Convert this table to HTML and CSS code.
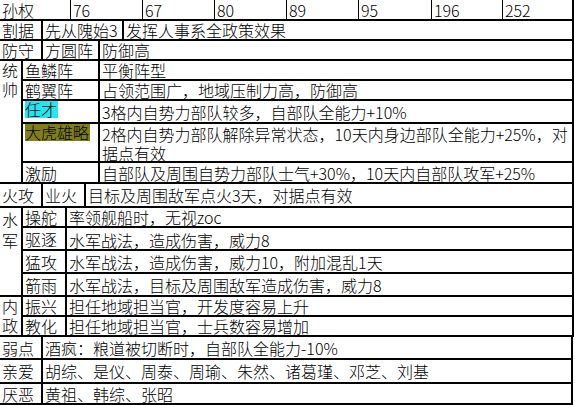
FILE: index.html
```html
<!DOCTYPE html>
<html lang="zh-CN">
<head>
<meta charset="utf-8">
<title>孙权</title>
<link rel="stylesheet" href="styles.css">
</head>
<body>
<div class="sheet">
  <div class="sec stats">
    <div class="c thin">孙权</div>
    <div class="c thin">76</div>
    <div class="c thin">67</div>
    <div class="c thin">80</div>
    <div class="c thin">89</div>
    <div class="c thin">95</div>
    <div class="c thin">196</div>
    <div class="c">252</div>
  </div>

  <div class="sec s-geju">
    <div class="c">割据</div>
    <div class="c">先从隗始3</div>
    <div class="c">发挥人事系全政策效果</div>
  </div>

  <div class="sec s-fangshou">
    <div class="c">防守</div>
    <div class="c">方圆阵</div>
    <div class="c">防御高</div>
  </div>

  <div class="sec s-tongshuai">
    <div class="c group g-ts">统<br>帅</div>
    <div class="c">鱼鳞阵</div>
    <div class="c">平衡阵型</div>
    <div class="c">鹤翼阵</div>
    <div class="c">占领范围广，地域压制力高，防御高</div>
    <div class="c top"><span class="hl hl-cyan">任才</span></div>
    <div class="c">3格内自势力部队较多，自部队全能力+10%</div>
    <div class="c top"><span class="hl hl-olive">大虎雄略</span></div>
    <div class="c top multi">2格内自势力部队解除异常状态，10天内身边部队全能力+25%，对<br>据点有效</div>
    <div class="c">激励</div>
    <div class="c">自部队及周围自势力部队士气+30%，10天内自部队攻军+25%</div>
  </div>

  <div class="sec s-huogong">
    <div class="c">火攻</div>
    <div class="c">业火</div>
    <div class="c">目标及周围敌军点火3天，对据点有效</div>
  </div>

  <div class="sec s-shuijun">
    <div class="c group g-sj">水<br>军</div>
    <div class="c">操舵</div>
    <div class="c">率领舰船时，无视zoc</div>
    <div class="c">驱逐</div>
    <div class="c low">水军战法，造成伤害，威力8</div>
    <div class="c">猛攻</div>
    <div class="c">水军战法，造成伤害，威力10，附加混乱1天</div>
    <div class="c">箭雨</div>
    <div class="c">水军战法，目标及周围敌军造成伤害，威力8</div>
  </div>

  <div class="sec s-neizheng">
    <div class="c group g-nz">内<br>政</div>
    <div class="c">振兴</div>
    <div class="c">担任地域担当官，开发度容易上升</div>
    <div class="c">教化</div>
    <div class="c">担任地域担当官，士兵数容易增加</div>
  </div>

  <div class="sec s-misc">
    <div class="c">弱点</div>
    <div class="c">酒疯：粮道被切断时，自部队全能力-10%</div>
    <div class="c">亲爱</div>
    <div class="c">胡综、是仪、周泰、周瑜、朱然、诸葛瑾、邓芝、刘基</div>
    <div class="c">厌恶</div>
    <div class="c">黄祖、韩综、张昭</div>
  </div>
</div>
</body>
</html>
```
FILE: styles.css
```css
html, body {
  margin: 0;
  padding: 0;
  background: #ffffff;
}

.sheet {
  width: 574px;
  font-family: "Noto Sans CJK SC", "Noto Sans CJK JP", sans-serif;
  font-size: 16px;
  font-weight: 300;
  color: #000000;
}

.sec {
  display: grid;
}

.c {
  box-sizing: border-box;
  border-right: 2px solid #000;
  border-bottom: 2px solid #000;
  padding-left: 2px;
  display: flex;
  align-items: center;
  white-space: nowrap;
  line-height: 18px;
}

.c.thin {
  border-right-width: 1px;
}

.c.top {
  align-items: flex-start;
}

.c.low {
  align-items: flex-end;
}

.c.multi {
  display: block;
  padding-top: 1px;
  line-height: 19px;
}

.group {
  display: block;
  line-height: 19px;
}

.g-ts { grid-row: 1 / span 5; padding-top: 0; }
.g-sj { grid-row: 1 / span 4; padding-top: 1px; line-height: 21px; }
.g-nz { grid-row: 1 / span 2; padding-top: 0; }

.hl {
  display: inline-block;
  line-height: 17px;
  height: 17px;
  padding: 0 1px 0 0;
}

.hl-cyan { background: #22e6f2; }
.hl-olive { background: #7f7f14; }

.stats {
  grid-template-columns: 71px 72px 72px 72px 72px 73px 71px 71px;
  grid-template-rows: 21px;
}

.s-geju {
  grid-template-columns: 43px 81px 1fr;
  grid-template-rows: 20px;
}

.s-fangshou {
  grid-template-columns: 43px 57px 1fr;
  grid-template-rows: 20px;
}

.s-tongshuai {
  grid-template-columns: 23px 77px 1fr;
  grid-template-rows: 20px 20px 23px 39px 21px;
}

.s-huogong {
  grid-template-columns: 43px 43px 1fr;
  grid-template-rows: 24px;
}

.s-shuijun {
  grid-template-columns: 23px 44px 1fr;
  grid-template-rows: 20px 23px 23px 23px;
}

.s-neizheng {
  grid-template-columns: 23px 44px 1fr;
  grid-template-rows: 20px 20px;
}

.s-misc {
  width: 573px;
  grid-template-columns: 43px 1fr;
  grid-template-rows: 23px 24px 21px;
}
```
